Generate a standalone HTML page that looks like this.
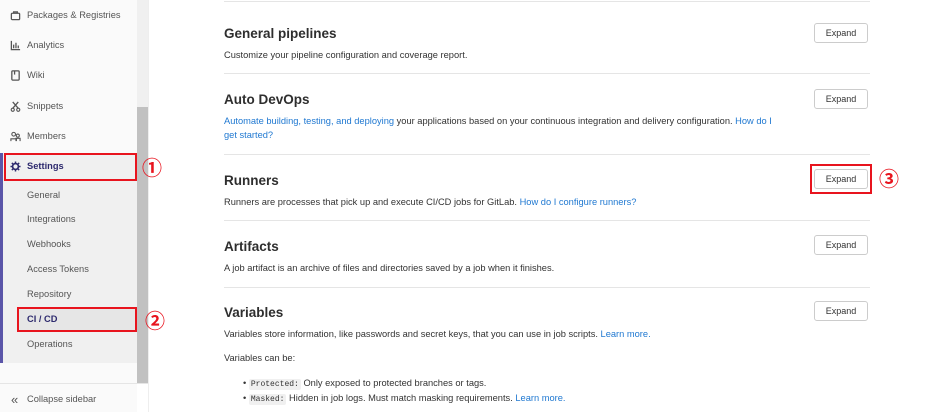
<!DOCTYPE html>
<html><head><style>
*{margin:0;padding:0;box-sizing:border-box}
body{width:944px;height:412px;overflow:hidden;background:#fff;font-family:"Liberation Sans",sans-serif;position:relative;color:#2e2e2e}
.a{position:absolute;white-space:nowrap}
.side{position:absolute;left:0;top:0;width:137px;height:412px;background:#fafafa}
.it{font-size:9.3px;color:#555;left:27px}
.ic{left:10px;width:11px;height:11px}
.sub{position:absolute;left:0;top:153px;width:137px;height:210px;background:#f0f0f0}
.bar{position:absolute;left:0;top:153px;width:3px;height:210px;background:#5a55a8}
.line{position:absolute;left:224px;width:646px;height:1px;background:#e5e5e5}
h2{position:absolute;left:224px;font-size:13.5px;font-weight:bold;color:#2e2e2e;white-space:nowrap}
.d{position:absolute;left:224px;font-size:9.3px;color:#333;white-space:nowrap;line-height:14px}
.btn{position:absolute;left:814px;width:54px;height:20px;border:1px solid #ccc;border-radius:3px;font-size:9px;display:flex;align-items:center;justify-content:center;color:#333;background:#fff}
.red{position:absolute;border:2px solid #e8141e}
.num{position:absolute;color:#e8141e;font-size:20px;font-weight:bold;font-family:"Noto Sans CJK JP",sans-serif;line-height:20px}
a{color:#1f78d1;text-decoration:none}
code{font-family:"Liberation Mono",monospace;font-size:8px;background:#f0f0f0;padding:1px 2px;border-radius:2px}
</style></head><body>
<div class="side"></div>
<div class="sub"></div>
<div class="bar"></div>
<div class="a" style="left:137px;top:0;width:11px;height:383px;background:#f0f0f0"></div>
<div class="a" style="left:137px;top:107px;width:11px;height:276px;background:#c1c1c1"></div>
<div class="a" style="left:0;top:383px;width:148px;height:1px;background:#e5e5e5"></div>
<div class="a" style="left:148px;top:0;width:1px;height:412px;background:#eee"></div>

<svg class="a ic" style="top:10px" viewBox="0 0 12 12"><rect x="1.5" y="3.5" width="9" height="7" rx="1" fill="none" stroke="#555" stroke-width="1.4"/><path d="M4 3.5V2h4v1.5" fill="none" stroke="#555" stroke-width="1.4"/></svg>
<div class="a it" style="top:10px">Packages &amp; Registries</div>
<svg class="a ic" style="top:40px" viewBox="0 0 12 12"><path d="M1.5 1v9.5H11M4 5v4M6.5 3v6M9 6v3" fill="none" stroke="#555" stroke-width="1.4"/></svg>
<div class="a it" style="top:40px">Analytics</div>
<svg class="a ic" style="top:70px" viewBox="0 0 12 12"><rect x="2" y="1" width="8" height="10" rx="1" fill="none" stroke="#555" stroke-width="1.4"/><path d="M5 1v4" stroke="#555" stroke-width="1.4"/></svg>
<div class="a it" style="top:70px">Wiki</div>
<svg class="a ic" style="top:101px" viewBox="0 0 12 12"><path d="M3 1l6 7M9 1L3 8" stroke="#555" stroke-width="1.4"/><circle cx="3" cy="9.5" r="1.7" fill="none" stroke="#555" stroke-width="1.2"/><circle cx="9" cy="9.5" r="1.7" fill="none" stroke="#555" stroke-width="1.2"/></svg>
<div class="a it" style="top:101px">Snippets</div>
<svg class="a ic" style="top:131px" viewBox="0 0 12 12"><circle cx="4" cy="3.5" r="2" fill="none" stroke="#555" stroke-width="1.2"/><circle cx="8.5" cy="5" r="1.7" fill="none" stroke="#555" stroke-width="1.2"/><path d="M1 11V8.5h6V11M6.5 11V8h4.5v3" fill="none" stroke="#555" stroke-width="1.2"/></svg>
<div class="a it" style="top:131px">Members</div>
<svg class="a ic" style="top:161px" viewBox="0 0 12 12"><circle cx="6" cy="6" r="3.2" fill="none" stroke="#2e2a6e" stroke-width="1.8"/><path d="M6 0.5v2M6 9.5v2M0.5 6h2M9.5 6h2M2 2l1.5 1.5M8.5 8.5L10 10M10 2L8.5 3.5M3.5 8.5L2 10" stroke="#2e2a6e" stroke-width="1.6"/></svg>
<div class="a it" style="top:161px;color:#2e2a6e;font-weight:bold">Settings</div>
<div class="a it" style="top:190px">General</div>
<div class="a it" style="top:214px">Integrations</div>
<div class="a it" style="top:239px">Webhooks</div>
<div class="a it" style="top:264px">Access Tokens</div>
<div class="a it" style="top:289px">Repository</div>
<div class="a" style="left:17px;top:308px;width:120px;height:24px;background:#e6e6e6"></div>
<div class="a it" style="top:314px;color:#2e2a6e;font-weight:bold">CI / CD</div>
<div class="a it" style="top:339px">Operations</div>
<div class="a" style="left:11px;top:392px;font-size:13px;color:#555">«</div>
<div class="a it" style="top:394px">Collapse sidebar</div>

<div class="red" style="left:4px;top:153px;width:133px;height:28px"></div>
<div class="num" style="left:142px;top:157px">①</div>
<div class="red" style="left:17px;top:307px;width:120px;height:25px"></div>
<div class="num" style="left:145px;top:310px">②</div>

<div class="line" style="top:1px"></div>
<h2 style="top:26px">General pipelines</h2>
<div class="d" style="top:48px">Customize your pipeline configuration and coverage report.</div>
<div class="btn" style="top:23px">Expand</div>
<div class="line" style="top:73px"></div>
<h2 style="top:92px">Auto DevOps</h2>
<div class="d" style="top:114px"><a>Automate building, testing, and deploying</a> your applications based on your continuous integration and delivery configuration. <a>How do I</a></div>
<div class="d" style="top:128px"><a>get started?</a></div>
<div class="btn" style="top:89px">Expand</div>
<div class="line" style="top:154px"></div>
<h2 style="top:173px">Runners</h2>
<div class="d" style="top:195px">Runners are processes that pick up and execute CI/CD jobs for GitLab. <a>How do I configure runners?</a></div>
<div class="btn" style="top:169px">Expand</div>
<div class="red" style="left:810px;top:164px;width:62px;height:30px"></div>
<div class="num" style="left:879px;top:168px">③</div>
<div class="line" style="top:220px"></div>
<h2 style="top:239px">Artifacts</h2>
<div class="d" style="top:261px">A job artifact is an archive of files and directories saved by a job when it finishes.</div>
<div class="btn" style="top:235px">Expand</div>
<div class="line" style="top:287px"></div>
<h2 style="top:305px">Variables</h2>
<div class="d" style="top:327px">Variables store information, like passwords and secret keys, that you can use in job scripts. <a>Learn more.</a></div>
<div class="d" style="top:351px">Variables can be:</div>
<div class="d" style="top:376px;left:243px">• <code>Protected:</code> Only exposed to protected branches or tags.</div>
<div class="d" style="top:391px;left:243px">• <code>Masked:</code> Hidden in job logs. Must match masking requirements. <a>Learn more.</a></div>
<div class="btn" style="top:301px">Expand</div>
</body></html>
